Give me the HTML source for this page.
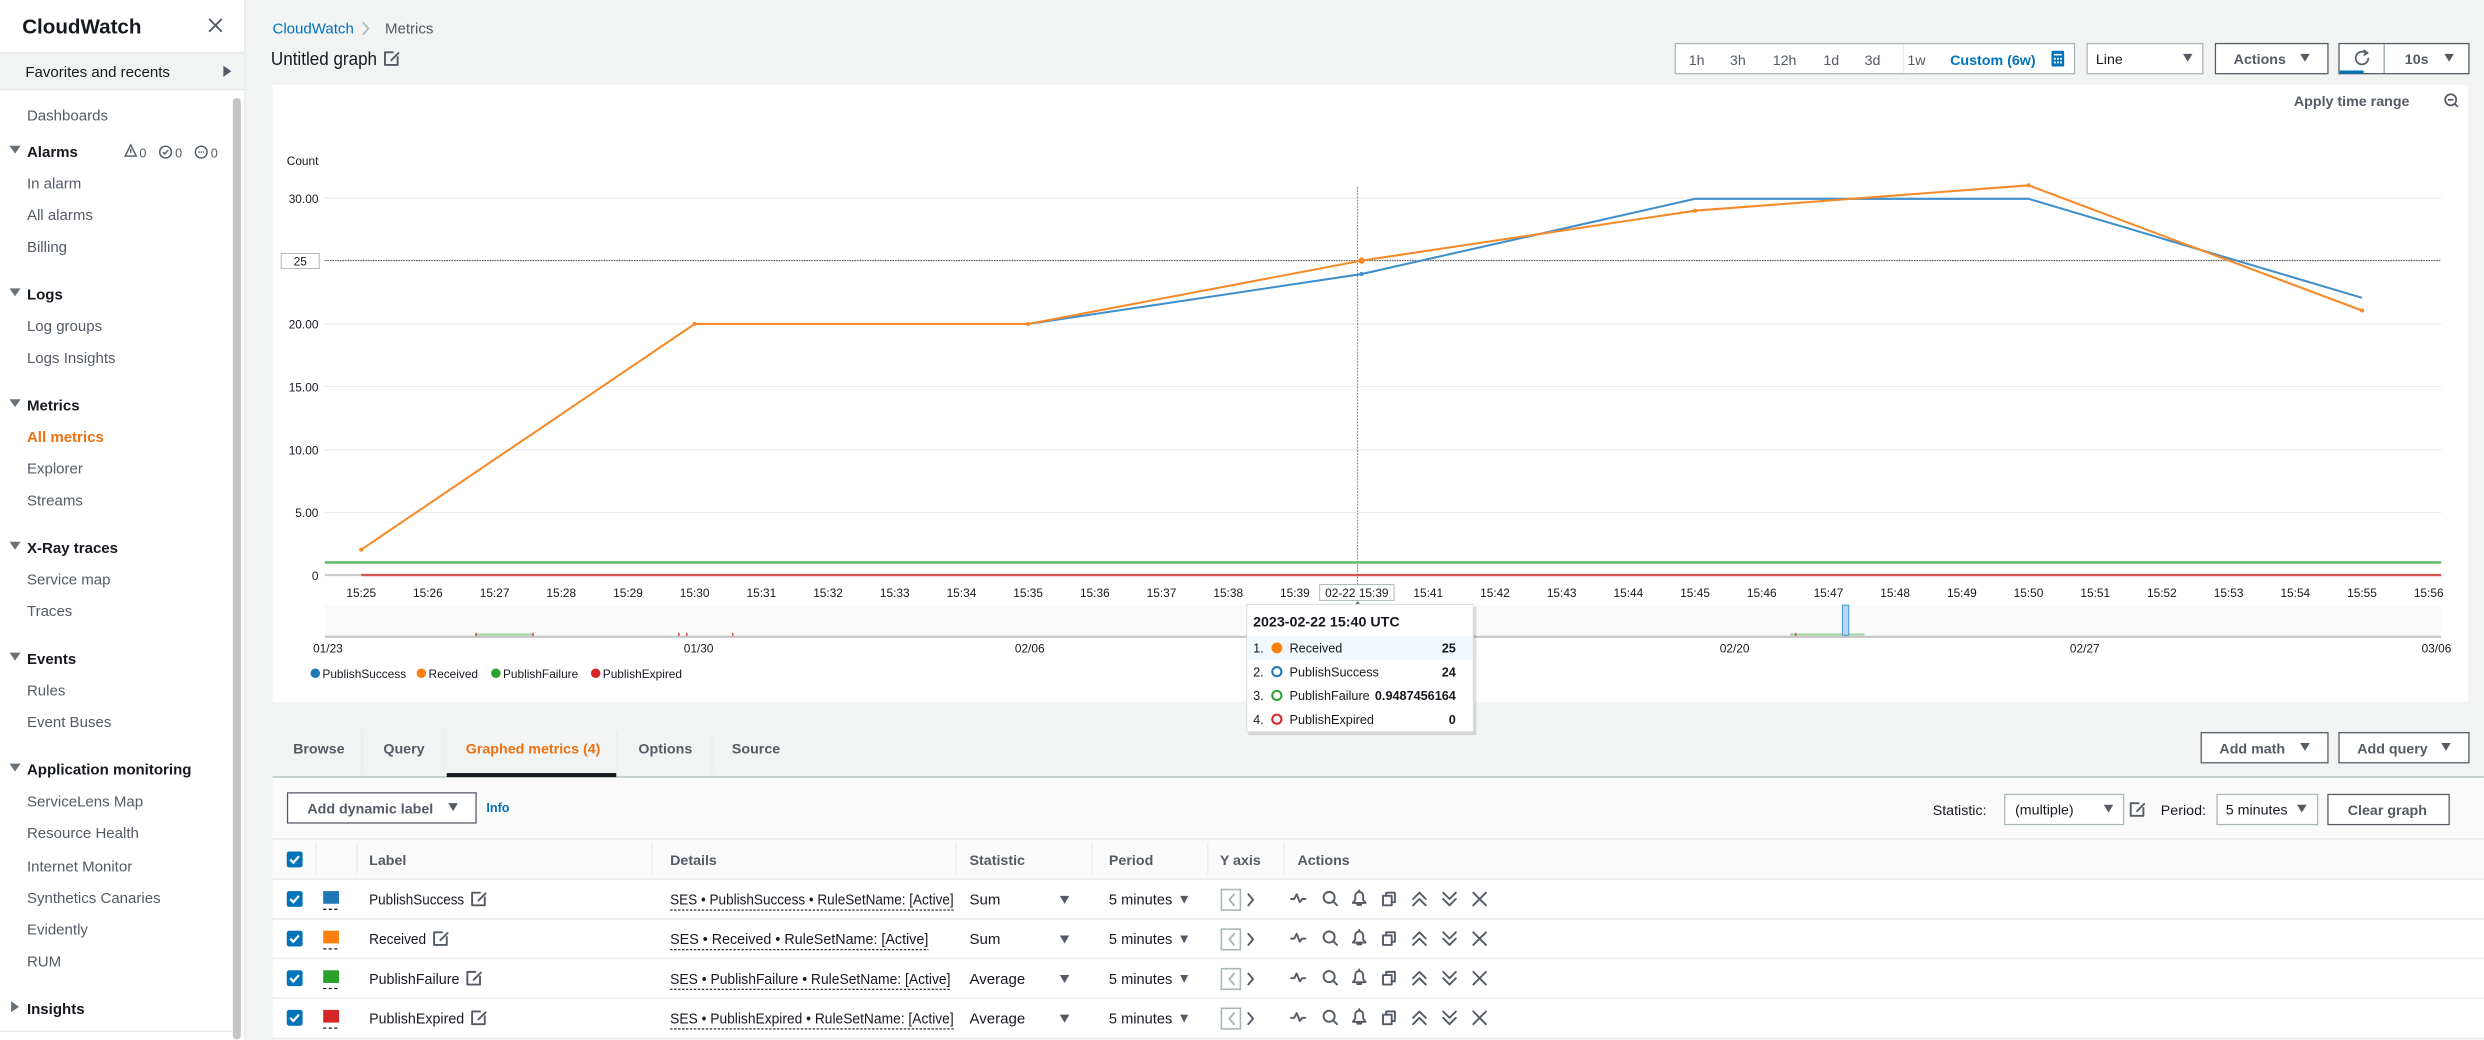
<!DOCTYPE html>
<html><head><meta charset="utf-8"><style>
html,body{margin:0;padding:0;width:2484px;height:1040px;overflow:hidden;background:#f2f3f3}
svg{display:block}
text{font-family:"Liberation Sans",sans-serif;fill:#16191f}
.s{font-size:9.5px}
.sb{font-size:9.5px;font-weight:bold}
.nav{font-size:9.5px;fill:#545b64}
.navh{font-size:9.5px;font-weight:bold;fill:#16191f}
.ax{font-size:7.5px;fill:#16191f}
.ic{fill:none;stroke:#545b64;stroke-width:1.2;stroke-linecap:round;stroke-linejoin:round}
</style></head><body>
<svg width="2484" height="1040" viewBox="0 0 1568 656.5" xmlns="http://www.w3.org/2000/svg">
<defs>
<g id="acts">
 <path class="ic" d="M-6 0h2l1.5-3 2 5 1.5-2h2"/>
 <g transform="translate(19,0)"><circle class="ic" cx="-1" cy="-1" r="3.5"/><path class="ic" d="M1.5 1.5l2.5 2.5"/></g>
 <g transform="translate(37,0)"><path class="ic" d="M-4 2.5h8l-1.5-2v-2.5a2.5 2.5 0 0 0-5 0v2.5z M-1.2 2.5v1.2h2.4v-1.2 M0 -5.5v0.5"/></g>
 <g transform="translate(56,0)"><rect class="ic" x="-4" y="-2" width="5.5" height="6"/><path class="ic" d="M-2 -2v-2h5.5v6h-2"/></g>
</g>
<path id="up" class="ic" d="M-4 0l4-4 4 4M-4 4l4-4 4 4"/>
<path id="dn" class="ic" d="M-4 -4l4 4 4-4M-4 0l4 4 4-4"/>
<path id="xx" class="ic" d="M-4 -4l8 8M4 -4l-8 8"/>
<path id="edit" class="ic" d="M3 -1v5h-8v-8h5M-1 1l4.5-4.5" />
<g id="cb"><rect x="-5" y="-5" width="10" height="10" rx="1.5" fill="#0073bb"/><path d="M-2.8 0l2 2 3.5-4" stroke="#fff" stroke-width="1.4" fill="none"/></g>
</defs>

<!-- sidebar -->
<rect x="0" y="0" width="154.5" height="656.5" fill="#fff"/>
<line x1="154.5" y1="0" x2="154.5" y2="656.5" stroke="#eaeded"/>
<text x="14" y="21" style="font-size:13px;font-weight:bold">CloudWatch</text>
<path d="M132 12l8 8M140 12l-8 8" stroke="#545b64" stroke-width="1.2"/>
<rect x="0" y="33.5" width="154" height="23" fill="#f2f3f3"/>
<line x1="0" y1="33.5" x2="154" y2="33.5" stroke="#e5e7e7"/>
<line x1="0" y1="56.5" x2="154" y2="56.5" stroke="#e5e7e7"/>
<text x="16" y="48.5" class="nav" style="fill:#16191f">Favorites and recents</text>
<path d="M141 41.5v7l5-3.5z" fill="#545b64"/>
<rect x="147" y="62" width="5" height="594" rx="2" fill="#c4c4c4"/>
<text x="17" y="76" class="nav">Dashboards</text>
<text x="17" y="119" class="nav">In alarm</text>
<text x="17" y="139" class="nav">All alarms</text>
<text x="17" y="159" class="nav">Billing</text>
<text x="17" y="209" class="nav">Log groups</text>
<text x="17" y="229" class="nav">Logs Insights</text>
<text x="17" y="279" class="nav" style="fill:#ec7211;font-weight:bold">All metrics</text>
<text x="17" y="299" class="nav">Explorer</text>
<text x="17" y="319" class="nav">Streams</text>
<text x="17" y="369" class="nav">Service map</text>
<text x="17" y="389" class="nav">Traces</text>
<text x="17" y="439" class="nav">Rules</text>
<text x="17" y="459" class="nav">Event Buses</text>
<text x="17" y="509" class="nav">ServiceLens Map</text>
<text x="17" y="529" class="nav">Resource Health</text>
<text x="17" y="550" class="nav">Internet Monitor</text>
<text x="17" y="570" class="nav">Synthetics Canaries</text>
<text x="17" y="590" class="nav">Evidently</text>
<text x="17" y="610" class="nav">RUM</text>
<text x="17" y="99" class="navh">Alarms</text>
<text x="17" y="189" class="navh">Logs</text>
<text x="17" y="259" class="navh">Metrics</text>
<text x="17" y="349" class="navh">X-Ray traces</text>
<text x="17" y="419" class="navh">Events</text>
<text x="17" y="489" class="navh">Application monitoring</text>
<text x="17" y="640" class="navh">Insights</text>
<g fill="#687078">
<path d="M6 92h7l-3.5 5z"/><path d="M6 182h7l-3.5 5z"/><path d="M6 252h7l-3.5 5z"/><path d="M6 342h7l-3.5 5z"/><path d="M6 412h7l-3.5 5z"/><path d="M6 482h7l-3.5 5z"/><path d="M7 632v7l5-3.5z"/>
</g>
<path d="M82.5 91.5l-3.5 7h7z M82.5 94v2.5" fill="none" stroke="#545b64" stroke-width="0.9"/>
<text x="88" y="99.5" style="font-size:8px;fill:#545b64">0</text>
<circle cx="104.5" cy="96" r="3.7" fill="none" stroke="#545b64" stroke-width="0.9"/><path d="M102.8 96l1.2 1.2 2.2-2.4" fill="none" stroke="#545b64" stroke-width="0.9"/>
<text x="110.5" y="99.5" style="font-size:8px;fill:#545b64">0</text>
<circle cx="127" cy="96" r="3.7" fill="none" stroke="#545b64" stroke-width="0.9"/><path d="M125.3 96h3.4" stroke="#545b64" stroke-dasharray="0.8 0.6"/>
<text x="133" y="99.5" style="font-size:8px;fill:#545b64">0</text>
<line x1="0" y1="651" x2="147" y2="651" stroke="#eaeded"/>

<!-- header -->
<text x="172" y="21" style="font-size:9.5px;fill:#0073bb">CloudWatch</text>
<path d="M229 14l3.5 4-3.5 4" fill="none" stroke="#aab7b8"/>
<text x="243" y="21" style="font-size:9.5px;fill:#545b64">Metrics</text>
<text x="171" y="41" style="font-size:11.5px" textLength="67" lengthAdjust="spacingAndGlyphs">Untitled graph</text>
<g transform="translate(248,37)"><use href="#edit"/></g>

<!-- toolbar -->
<rect x="1057.5" y="27.5" width="252" height="19" fill="#fff" stroke="#aab7b8" stroke-width="0.8"/>
<line x1="1201.5" y1="28" x2="1201.5" y2="46" stroke="#eaeded"/>
<text x="1066" y="41" style="font-size:9px;fill:#545b64">1h</text>
<text x="1092" y="41" style="font-size:9px;fill:#545b64">3h</text>
<text x="1119" y="41" style="font-size:9px;fill:#545b64">12h</text>
<text x="1151" y="41" style="font-size:9px;fill:#545b64">1d</text>
<text x="1177" y="41" style="font-size:9px;fill:#545b64">3d</text>
<text x="1204" y="41" style="font-size:9px;fill:#545b64">1w</text>
<text x="1231" y="41" style="font-size:9px;fill:#0073bb;font-weight:bold">Custom (6w)</text>
<rect x="1295" y="32" width="8" height="10" rx="1" fill="#0073bb"/><g fill="#fff"><rect x="1296.5" y="34" width="5" height="1"/><rect x="1296.5" y="36.5" width="1.2" height="1.2"/><rect x="1298.5" y="36.5" width="1.2" height="1.2"/><rect x="1300.4" y="36.5" width="1.2" height="1.2"/><rect x="1296.5" y="38.8" width="1.2" height="1.2"/><rect x="1298.5" y="38.8" width="1.2" height="1.2"/><rect x="1300.4" y="38.8" width="1.2" height="1.2"/></g>
<rect x="1317.5" y="27.5" width="73" height="19" fill="#fff" stroke="#aab7b8" stroke-width="0.8"/>
<text x="1323" y="40.5" style="font-size:9px">Line</text>
<path d="M1378 34h6l-3 5z" fill="#545b64"/>
<rect x="1398.5" y="27.5" width="71" height="19" fill="#fff" stroke="#545b64" stroke-width="0.8"/>
<text x="1410" y="40.5" style="font-size:9px;font-weight:bold;fill:#545b64">Actions</text>
<path d="M1452 34h6l-3 5z" fill="#545b64"/>
<rect x="1476.5" y="27.5" width="82" height="19" fill="#fff" stroke="#545b64" stroke-width="0.8"/>
<line x1="1505" y1="28" x2="1505" y2="46" stroke="#aab7b8"/>
<path d="M1493.5 33.5a4 4 0 1 0 1.5 3" fill="none" stroke="#545b64" stroke-width="1.1"/><path d="M1492 31.5l2.5 2-2.5 1.5" fill="none" stroke="#545b64" stroke-width="1"/>
<rect x="1477" y="44.5" width="15" height="2" fill="#0073bb"/>
<text x="1518" y="40.5" style="font-size:9px;font-weight:bold;fill:#545b64">10s</text>
<path d="M1543 34h6l-3 5z" fill="#545b64"/>

<!-- chart panel -->
<rect x="172" y="53.5" width="1386" height="389.5" fill="#fff"/>
<text x="1448" y="67" style="font-size:9px;font-weight:bold;fill:#545b64">Apply time range</text>
<circle cx="1547" cy="63" r="3.5" fill="none" stroke="#545b64" stroke-width="1.1"/><path d="M1545.3 63h3.4M1549.5 65.5l2 2" stroke="#545b64" stroke-width="1.1"/>
<text x="181" y="104" class="ax">Count</text>
<g stroke="#eaeded" stroke-width="0.8">
<line x1="205" y1="125" x2="1541" y2="125"/>
<line x1="205" y1="204.5" x2="1541" y2="204.5"/>
<line x1="205" y1="244" x2="1541" y2="244"/>
<line x1="205" y1="284" x2="1541" y2="284"/>
<line x1="205" y1="323.5" x2="1541" y2="323.5"/>
</g>
<g text-anchor="end">
<text x="201" y="128" class="ax">30.00</text>
<text x="201" y="207.5" class="ax">20.00</text>
<text x="201" y="247" class="ax">15.00</text>
<text x="201" y="287" class="ax">10.00</text>
<text x="201" y="326.5" class="ax">5.00</text>
<text x="201" y="366" class="ax">0</text>
</g>
<line x1="205" y1="164.5" x2="1541" y2="164.5" stroke="#444" stroke-width="0.6" stroke-dasharray="1 0.6"/>
<rect x="177.5" y="160" width="24" height="9.5" fill="#fff" stroke="#aab7b8" stroke-width="0.6"/>
<text x="189.5" y="167.5" class="ax" text-anchor="middle">25</text>
<line x1="857" y1="118" x2="857" y2="380" stroke="#666" stroke-width="0.5" stroke-dasharray="1.2 0.8"/>
<line x1="205" y1="363" x2="228" y2="363" stroke="#ccc" stroke-width="1.3"/>
<line x1="205" y1="355" x2="1541" y2="355" stroke="#5cb85c" stroke-width="1.5"/>
<line x1="228" y1="363" x2="1541" y2="363" stroke="#d9534f" stroke-width="1.5"/>
<polyline points="649,204.5 859.5,173 1070,125.5 1280.5,125.5 1491,188" fill="none" stroke="#3f8fcb" stroke-width="1.3"/>
<polyline points="228,347 438.5,204.5 649,204.5 859.5,164.5 1070,133 1280.5,117 1491,196" fill="none" stroke="#f68a28" stroke-width="1.3"/>
<g fill="#f68a28"><circle cx="228" cy="347" r="1.3"/><circle cx="438.5" cy="204.5" r="1.3"/><circle cx="649" cy="204.5" r="1.3"/><circle cx="859.5" cy="164.5" r="2"/><circle cx="1070" cy="133" r="1.3"/><circle cx="1280.5" cy="117" r="1.3"/><circle cx="1491" cy="196" r="1.3"/></g>
<circle cx="859.5" cy="173" r="1.3" fill="#3f8fcb"/>
<g text-anchor="middle">
<text x="228" y="377" class="ax">15:25</text><text x="270.1" y="377" class="ax">15:26</text><text x="312.2" y="377" class="ax">15:27</text><text x="354.3" y="377" class="ax">15:28</text><text x="396.4" y="377" class="ax">15:29</text><text x="438.5" y="377" class="ax">15:30</text><text x="480.6" y="377" class="ax">15:31</text><text x="522.7" y="377" class="ax">15:32</text><text x="564.8" y="377" class="ax">15:33</text><text x="606.9" y="377" class="ax">15:34</text><text x="649" y="377" class="ax">15:35</text><text x="691.1" y="377" class="ax">15:36</text><text x="733.2" y="377" class="ax">15:37</text><text x="775.3" y="377" class="ax">15:38</text><text x="817.4" y="377" class="ax">15:39</text><text x="901.6" y="377" class="ax">15:41</text><text x="943.7" y="377" class="ax">15:42</text><text x="985.8" y="377" class="ax">15:43</text><text x="1027.9" y="377" class="ax">15:44</text><text x="1070" y="377" class="ax">15:45</text><text x="1112.1" y="377" class="ax">15:46</text><text x="1154.2" y="377" class="ax">15:47</text><text x="1196.3" y="377" class="ax">15:48</text><text x="1238.4" y="377" class="ax">15:49</text><text x="1280.5" y="377" class="ax">15:50</text><text x="1322.6" y="377" class="ax">15:51</text><text x="1364.7" y="377" class="ax">15:52</text><text x="1406.8" y="377" class="ax">15:53</text><text x="1448.9" y="377" class="ax">15:54</text><text x="1491" y="377" class="ax">15:55</text><text x="1533.1" y="377" class="ax">15:56</text>
</g>
<rect x="833" y="369" width="47" height="10" fill="#fff" stroke="#aab7b8" stroke-width="0.6"/>
<text x="856.5" y="377" class="ax" text-anchor="middle">02-22 15:39</text>
<path d="M854.5 382.5h5l-2.5-3z" fill="#545b64"/>
<!-- overview -->
<rect x="205" y="382" width="1336" height="20" fill="#fafafa"/>
<line x1="205" y1="402" x2="1541" y2="402" stroke="#c4c4c4" stroke-width="1.3"/>
<line x1="300" y1="400.5" x2="336" y2="400.5" stroke="#a8d5a8" stroke-width="1.3"/>
<line x1="1130" y1="400.5" x2="1177" y2="400.5" stroke="#a8d5a8" stroke-width="1.3"/>
<g fill="#d9534f"><rect x="300" y="399.5" width="1" height="2"/><rect x="336" y="399.5" width="1" height="2"/><rect x="428" y="399.5" width="1" height="2"/><rect x="433" y="399.5" width="1" height="2"/><rect x="462" y="399.5" width="1" height="2"/><rect x="1133" y="399.5" width="1" height="2"/></g>
<rect x="1163" y="382" width="4" height="19" fill="#b8d6f0" stroke="#3f8fcb" stroke-width="0.6"/>
<g text-anchor="middle">
<text x="207" y="412" class="ax">01/23</text><text x="441" y="412" class="ax">01/30</text><text x="650" y="412" class="ax">02/06</text><text x="1095" y="412" class="ax">02/20</text><text x="1316" y="412" class="ax">02/27</text><text x="1538" y="412" class="ax">03/06</text>
</g>
<circle cx="199" cy="425" r="3" fill="#1f77b4"/><text x="203.5" y="428" class="ax">PublishSuccess</text>
<circle cx="266" cy="425" r="3" fill="#ff7f0e"/><text x="270.5" y="428" class="ax">Received</text>
<circle cx="313" cy="425" r="3" fill="#2ca02c"/><text x="317.5" y="428" class="ax">PublishFailure</text>
<circle cx="376" cy="425" r="3" fill="#d62728"/><text x="380.5" y="428" class="ax">PublishExpired</text>

<!-- tabs -->
<line x1="172" y1="490.5" x2="1568" y2="490.5" stroke="#aab7b8" stroke-width="0.8"/>
<g fill="#eaeded"><rect x="228" y="462" width="0.8" height="27"/><rect x="280" y="462" width="0.8" height="27"/><rect x="389" y="462" width="0.8" height="27"/><rect x="449" y="462" width="0.8" height="27"/></g>
<text x="185" y="475.5" style="font-size:9px;font-weight:bold;fill:#545b64">Browse</text>
<text x="242" y="475.5" style="font-size:9px;font-weight:bold;fill:#545b64">Query</text>
<text x="294" y="475.5" style="font-size:9px;font-weight:bold;fill:#ec7211">Graphed metrics (4)</text>
<text x="403" y="475.5" style="font-size:9px;font-weight:bold;fill:#545b64">Options</text>
<text x="462" y="475.5" style="font-size:9px;font-weight:bold;fill:#545b64">Source</text>
<rect x="282" y="488" width="107" height="2.5" fill="#16191f"/>
<rect x="1389.5" y="462.5" width="80" height="19" fill="#fff" stroke="#545b64" stroke-width="0.8"/>
<text x="1401" y="475.5" style="font-size:9px;font-weight:bold;fill:#545b64">Add math</text>
<path d="M1452 469h6l-3 5z" fill="#545b64"/>
<rect x="1476.5" y="462.5" width="82" height="19" fill="#fff" stroke="#545b64" stroke-width="0.8"/>
<text x="1488" y="475.5" style="font-size:9px;font-weight:bold;fill:#545b64">Add query</text>
<path d="M1541 469h6l-3 5z" fill="#545b64"/>

<!-- lower panel -->
<rect x="172" y="491" width="1396" height="166" fill="#fafafa"/>
<rect x="181.5" y="500.5" width="119" height="19" fill="#fff" stroke="#545b64" stroke-width="0.8"/>
<text x="194" y="513.5" style="font-size:9px;font-weight:bold;fill:#545b64">Add dynamic label</text>
<path d="M283 507h6l-3 5z" fill="#545b64"/>
<text x="307" y="512.5" style="font-size:8px;font-weight:bold;fill:#0073bb">Info</text>
<text x="1220" y="514.5" style="font-size:9px">Statistic:</text>
<rect x="1265.5" y="501.5" width="75" height="19" fill="#fff" stroke="#aab7b8" stroke-width="0.8"/>
<text x="1272" y="514" style="font-size:9px">(multiple)</text>
<path d="M1328 508h6l-3 5z" fill="#545b64"/>
<g transform="translate(1350,511)"><use href="#edit"/></g>
<text x="1364" y="514.5" style="font-size:9px">Period:</text>
<rect x="1399.5" y="501.5" width="63.5" height="19" fill="#fff" stroke="#aab7b8" stroke-width="0.8"/>
<text x="1405" y="514" style="font-size:9px">5 minutes</text>
<path d="M1450 508h6l-3 5z" fill="#545b64"/>
<rect x="1469.5" y="501.5" width="76.5" height="19" fill="#fff" stroke="#545b64" stroke-width="0.8"/>
<text x="1482" y="514.5" style="font-size:9px;font-weight:bold;fill:#545b64">Clear graph</text>
<line x1="172" y1="529.5" x2="1568" y2="529.5" stroke="#eaeded"/>
<!-- table header -->
<g fill="#eaeded"><rect x="199" y="532" width="0.8" height="20"/><rect x="225" y="532" width="0.8" height="20"/><rect x="411" y="532" width="0.8" height="20"/><rect x="603" y="532" width="0.8" height="20"/><rect x="689" y="532" width="0.8" height="20"/><rect x="762" y="532" width="0.8" height="20"/><rect x="810" y="532" width="0.8" height="20"/></g>
<g transform="translate(186,542.5)"><use href="#cb"/></g>
<text x="233" y="546" style="font-size:9px;font-weight:bold;fill:#545b64">Label</text>
<text x="423" y="546" style="font-size:9px;font-weight:bold;fill:#545b64">Details</text>
<text x="612" y="546" style="font-size:9px;font-weight:bold;fill:#545b64">Statistic</text>
<text x="700" y="546" style="font-size:9px;font-weight:bold;fill:#545b64">Period</text>
<text x="770" y="546" style="font-size:9px;font-weight:bold;fill:#545b64">Y axis</text>
<text x="819" y="546" style="font-size:9px;font-weight:bold;fill:#545b64">Actions</text>
<!-- rows -->
<rect x="172" y="555" width="1396" height="101" fill="#fff"/>
<g stroke="#eaeded"><line x1="172" y1="555" x2="1568" y2="555"/><line x1="172" y1="580" x2="1568" y2="580"/><line x1="172" y1="605" x2="1568" y2="605"/><line x1="172" y1="630" x2="1568" y2="630"/><line x1="172" y1="655.5" x2="1568" y2="655.5"/></g>

<g transform="translate(0,567.5)">
<use href="#cb" x="186"/><rect x="204" y="-5" width="10" height="8" fill="#1f77b4"/><path d="M204 6.5h10" stroke="#16191f" stroke-dasharray="2 1.5" stroke-width="0.8"/>
<text x="233" y="3.5" class="s" textLength="60" lengthAdjust="spacingAndGlyphs">PublishSuccess</text><use href="#edit" x="303" y="0"/>
<text x="423" y="3.5" class="s" textLength="179" lengthAdjust="spacingAndGlyphs">SES • PublishSuccess • RuleSetName: [Active]</text><path d="M423 7h179" stroke="#16191f" stroke-dasharray="1.5 1" stroke-width="0.7"/>
<text x="612" y="3.5" class="s">Sum</text><path d="M669 -2h6l-3 5z" fill="#545b64"/>
<text x="700" y="3.5" class="s" textLength="40" lengthAdjust="spacingAndGlyphs">5 minutes</text><path d="M745 -2h5l-2.5 5z" fill="#545b64"/>
<rect x="771" y="-6" width="12" height="13" fill="none" stroke="#aab7b8"/><path d="M779 -3l-3 3.5 3 3.5" class="ic" style="stroke:#aab7b8"/><path d="M788 -3l3 3.5-3 3.5" class="ic"/>
<use href="#acts" x="821"/><use href="#up" x="896" style="stroke:#aab7b8"/><use href="#dn" x="915"/><use href="#xx" x="934"/>
</g>
<g transform="translate(0,592.5)">
<use href="#cb" x="186"/><rect x="204" y="-5" width="10" height="8" fill="#ff7f0e"/><path d="M204 6.5h10" stroke="#16191f" stroke-dasharray="2 1.5" stroke-width="0.8"/>
<text x="233" y="3.5" class="s" textLength="36" lengthAdjust="spacingAndGlyphs">Received</text><use href="#edit" x="279" y="0"/>
<text x="423" y="3.5" class="s" textLength="163" lengthAdjust="spacingAndGlyphs">SES • Received • RuleSetName: [Active]</text><path d="M423 7h163" stroke="#16191f" stroke-dasharray="1.5 1" stroke-width="0.7"/>
<text x="612" y="3.5" class="s">Sum</text><path d="M669 -2h6l-3 5z" fill="#545b64"/>
<text x="700" y="3.5" class="s" textLength="40" lengthAdjust="spacingAndGlyphs">5 minutes</text><path d="M745 -2h5l-2.5 5z" fill="#545b64"/>
<rect x="771" y="-6" width="12" height="13" fill="none" stroke="#aab7b8"/><path d="M779 -3l-3 3.5 3 3.5" class="ic" style="stroke:#aab7b8"/><path d="M788 -3l3 3.5-3 3.5" class="ic"/>
<use href="#acts" x="821"/><use href="#up" x="896"/><use href="#dn" x="915"/><use href="#xx" x="934"/>
</g>
<g transform="translate(0,617.5)">
<use href="#cb" x="186"/><rect x="204" y="-5" width="10" height="8" fill="#2ca02c"/><path d="M204 6.5h10" stroke="#16191f" stroke-dasharray="2 1.5" stroke-width="0.8"/>
<text x="233" y="3.5" class="s" textLength="57" lengthAdjust="spacingAndGlyphs">PublishFailure</text><use href="#edit" x="300" y="0"/>
<text x="423" y="3.5" class="s" textLength="177" lengthAdjust="spacingAndGlyphs">SES • PublishFailure • RuleSetName: [Active]</text><path d="M423 7h177" stroke="#16191f" stroke-dasharray="1.5 1" stroke-width="0.7"/>
<text x="612" y="3.5" class="s">Average</text><path d="M669 -2h6l-3 5z" fill="#545b64"/>
<text x="700" y="3.5" class="s" textLength="40" lengthAdjust="spacingAndGlyphs">5 minutes</text><path d="M745 -2h5l-2.5 5z" fill="#545b64"/>
<rect x="771" y="-6" width="12" height="13" fill="none" stroke="#aab7b8"/><path d="M779 -3l-3 3.5 3 3.5" class="ic" style="stroke:#aab7b8"/><path d="M788 -3l3 3.5-3 3.5" class="ic"/>
<use href="#acts" x="821"/><use href="#up" x="896"/><use href="#dn" x="915"/><use href="#xx" x="934"/>
</g>
<g transform="translate(0,642.5)">
<use href="#cb" x="186"/><rect x="204" y="-5" width="10" height="8" fill="#d62728"/><path d="M204 6.5h10" stroke="#16191f" stroke-dasharray="2 1.5" stroke-width="0.8"/>
<text x="233" y="3.5" class="s" textLength="60" lengthAdjust="spacingAndGlyphs">PublishExpired</text><use href="#edit" x="303" y="0"/>
<text x="423" y="3.5" class="s" textLength="179" lengthAdjust="spacingAndGlyphs">SES • PublishExpired • RuleSetName: [Active]</text><path d="M423 7h179" stroke="#16191f" stroke-dasharray="1.5 1" stroke-width="0.7"/>
<text x="612" y="3.5" class="s">Average</text><path d="M669 -2h6l-3 5z" fill="#545b64"/>
<text x="700" y="3.5" class="s" textLength="40" lengthAdjust="spacingAndGlyphs">5 minutes</text><path d="M745 -2h5l-2.5 5z" fill="#545b64"/>
<rect x="771" y="-6" width="12" height="13" fill="none" stroke="#aab7b8"/><path d="M779 -3l-3 3.5 3 3.5" class="ic" style="stroke:#aab7b8"/><path d="M788 -3l3 3.5-3 3.5" class="ic"/>
<use href="#acts" x="821"/><use href="#up" x="896"/><use href="#dn" x="915" style="stroke:#aab7b8"/><use href="#xx" x="934"/>
</g>

<!-- tooltip -->
<rect x="788" y="383" width="144" height="81" fill="#000" opacity="0.12"/>
<rect x="787" y="381.5" width="143" height="80.5" fill="#fff" stroke="#d5dbdb" stroke-width="0.6"/>
<text x="791" y="395.5" style="font-size:9px;font-weight:bold">2023-02-22 15:40 UTC</text>
<rect x="787.5" y="401.5" width="142" height="15" fill="#f1f8fe"/>
<text x="791" y="412" style="font-size:8px">1.</text><circle cx="806" cy="409" r="3.4" fill="#ff7f0e"/><text x="814" y="412" style="font-size:8px">Received</text><text x="919" y="412" style="font-size:8px;font-weight:bold" text-anchor="end">25</text>
<text x="791" y="427" style="font-size:8px">2.</text><circle cx="806" cy="424" r="2.9" fill="none" stroke="#1f77b4" stroke-width="1.3"/><text x="814" y="427" style="font-size:8px">PublishSuccess</text><text x="919" y="427" style="font-size:8px;font-weight:bold" text-anchor="end">24</text>
<text x="791" y="442" style="font-size:8px">3.</text><circle cx="806" cy="439" r="2.9" fill="none" stroke="#2ca02c" stroke-width="1.3"/><text x="814" y="442" style="font-size:8px">PublishFailure</text><text x="919" y="442" style="font-size:8px;font-weight:bold" text-anchor="end">0.9487456164</text>
<text x="791" y="457" style="font-size:8px">4.</text><circle cx="806" cy="454" r="2.9" fill="none" stroke="#d62728" stroke-width="1.3"/><text x="814" y="457" style="font-size:8px">PublishExpired</text><text x="919" y="457" style="font-size:8px;font-weight:bold" text-anchor="end">0</text>
</svg>
</body></html>
